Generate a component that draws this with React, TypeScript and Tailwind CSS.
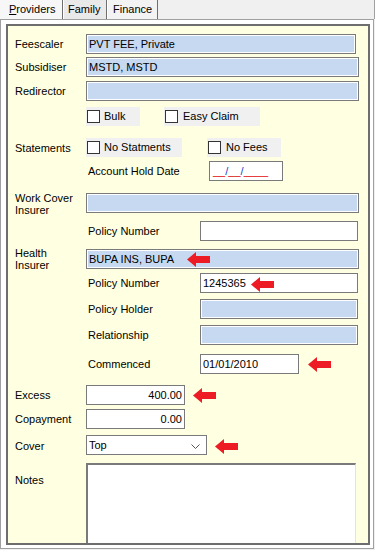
import React from "react";

const Arrow = ({ className = "" }: { className?: string }) => (
  <svg width="23" height="15" viewBox="0 0 23 15" className={className}>
    <polygon points="0,7.5 9,0 9,4 23,4 23,11 9,11 9,15" fill="#ed1c24" />
  </svg>
);

const Field = ({
  w,
  blue,
  right,
  children,
}: {
  w: string;
  blue?: boolean;
  right?: boolean;
  children?: React.ReactNode;
}) => (
  <div
    className={`${w} relative flex h-[20px] shrink-0 items-center border border-[#7a7a7a] ${
      blue ? "bg-[#c6d9f1] shadow-[inset_0_0_0_1px_#ffffff]" : "bg-white"
    } ${right ? "justify-end pr-[2px]" : "pl-[2px]"}`}
  >
    {children}
  </div>
);

const Check = ({ w, label, gap }: { w: string; label: string; gap: string }) => (
  <div className={`${w} flex h-[19px] shrink-0 items-center bg-[#f0f0f0] pl-[1px]`}>
    <span className="h-[13px] w-[13px] shrink-0 border border-[#333333] bg-white" />
    <span className={gap}>{label}</span>
  </div>
);

export default function App() {
  return (
    <div className="h-[550px] w-[375px] overflow-hidden bg-[#f0f0f0] font-['Liberation_Sans',Arial,sans-serif] text-[11px] text-black">
      {/* tab strip */}
      <div className="flex h-[19px] items-stretch">
        <div className="flex w-[63px] items-center border-r border-[#6f6f6f] bg-[#f7f7f7] pl-[9px]">
          <span>
            <span className="underline">P</span>roviders
          </span>
        </div>
        <div className="flex w-[44px] items-center border-l border-r border-l-white border-r-[#6f6f6f] bg-[#e9e9e9] pl-[4px]">
          Family
        </div>
        <div className="flex w-[51px] items-center border-l border-r border-l-white border-r-[#6f6f6f] bg-[#f3f3f3] pl-[5px]">
          Finance
        </div>
        <div className="flex-1 border-r border-[#a0a0a0]" />
      </div>

      {/* panel */}
      <div className="h-[530px] w-[374px] border border-[#a0a0a0] bg-white pb-[3px] pl-[5px] pr-[3px] pt-[4px]">
        <div className="h-[521px] w-[364px] overflow-hidden border-2 border-[#6e6e6e] bg-[#ffffe1] pl-[7px]">
          {/* Feescaler */}
          <div className="mt-[8px] flex h-[20px] items-center">
            <div className="w-[71px] shrink-0">Feescaler</div>
            <Field w="w-[270px]" blue>
              PVT FEE, Private
            </Field>
          </div>
          {/* Subsidiser */}
          <div className="mt-[3px] flex h-[20px] items-center">
            <div className="w-[71px] shrink-0">Subsidiser</div>
            <Field w="w-[273px]" blue>
              MSTD, MSTD
            </Field>
          </div>
          {/* Redirector */}
          <div className="mt-[4px] flex h-[20px] items-center">
            <div className="w-[71px] shrink-0">Redirector</div>
            <Field w="w-[273px]" blue />
          </div>
          {/* Bulk / Easy Claim */}
          <div className="mt-[6px] flex h-[19px] items-center">
            <div className="w-[71px] shrink-0" />
            <Check w="w-[54px]" label="Bulk" gap="ml-[4px]" />
            <div className="ml-[24px]">
              <Check w="w-[96px]" label="Easy Claim" gap="ml-[5px]" />
            </div>
          </div>
          {/* Statements */}
          <div className="mt-[12px] flex h-[19px] items-center">
            <div className="mt-[2px] w-[71px] shrink-0">Statements</div>
            <Check w="w-[96px]" label="No Statments" gap="ml-[4px]" />
            <div className="ml-[25px]">
              <Check w="w-[74px]" label="No Fees" gap="ml-[5px]" />
            </div>
          </div>
          {/* Account Hold Date */}
          <div className="mt-[4px] flex h-[20px] items-center">
            <div className="w-[71px] shrink-0" />
            <div className="w-[123px] shrink-0 pl-[2px]">Account Hold Date</div>
            <Field w="w-[74px]">
              <span className="pl-[1px]">
                <span className="text-[#e00000]">__</span>
                <span className="text-[#1a3cd0]">/</span>
                <span className="text-[#e00000]">__</span>
                <span className="text-[#1a3cd0]">/</span>
                <span className="text-[#e00000]">____</span>
              </span>
            </Field>
          </div>
          {/* Work Cover Insurer */}
          <div className="mt-[12px] flex h-[20px] items-start">
            <div className="-mt-[1px] w-[71px] shrink-0 leading-[12px]">
              Work Cover
              <br />
              Insurer
            </div>
            <Field w="w-[273px]" blue />
          </div>
          {/* Policy Number */}
          <div className="mt-[8px] flex h-[20px] items-center">
            <div className="w-[71px] shrink-0" />
            <div className="w-[114px] shrink-0 pl-[2px]">Policy Number</div>
            <Field w="w-[158px]" />
          </div>
          {/* Health Insurer */}
          <div className="mt-[8px] flex h-[20px] items-start">
            <div className="-mt-[2px] w-[71px] shrink-0 leading-[12px]">
              Health
              <br />
              Insurer
            </div>
            <Field w="w-[273px]" blue>
              BUPA INS, BUPA
              <Arrow className="absolute left-[100px] top-[2px]" />
            </Field>
          </div>
          {/* Policy Number */}
          <div className="mt-[4px] flex h-[20px] items-center">
            <div className="w-[71px] shrink-0" />
            <div className="w-[114px] shrink-0 pl-[2px]">Policy Number</div>
            <Field w="w-[158px]">
              1245365
              <Arrow className="absolute left-[50px] top-[3px]" />
            </Field>
          </div>
          {/* Policy Holder */}
          <div className="mt-[6px] flex h-[20px] items-center">
            <div className="w-[71px] shrink-0" />
            <div className="w-[114px] shrink-0 pl-[2px]">Policy Holder</div>
            <Field w="w-[158px]" blue />
          </div>
          {/* Relationship */}
          <div className="mt-[6px] flex h-[20px] items-center">
            <div className="w-[71px] shrink-0" />
            <div className="w-[114px] shrink-0 pl-[2px]">Relationship</div>
            <Field w="w-[158px]" blue />
          </div>
          {/* Commenced */}
          <div className="mt-[9px] flex h-[20px] items-center">
            <div className="w-[71px] shrink-0" />
            <div className="w-[114px] shrink-0 pl-[2px]">Commenced</div>
            <Field w="w-[99px]">01/01/2010</Field>
            <Arrow className="ml-[9px] mt-[1px]" />
          </div>
          {/* Excess */}
          <div className="mt-[11px] flex h-[20px] items-center">
            <div className="w-[71px] shrink-0">Excess</div>
            <Field w="w-[99px]" right>
              400.00
            </Field>
            <Arrow className="ml-[8px]" />
          </div>
          {/* Copayment */}
          <div className="mt-[4px] flex h-[20px] items-center">
            <div className="w-[71px] shrink-0">Copayment</div>
            <Field w="w-[99px]" right>
              0.00
            </Field>
          </div>
          {/* Cover */}
          <div className="mt-[6px] flex h-[20px] items-center">
            <div className="mt-[3px] w-[71px] shrink-0">Cover</div>
            <Field w="w-[121px]">
              <span>Top</span>
              <svg width="9" height="6" viewBox="0 0 9 6" className="absolute right-[6px] top-[8px]">
                <polyline points="0.5,0.5 4.5,4.5 8.5,0.5" fill="none" stroke="#555555" strokeWidth="1" />
              </svg>
            </Field>
            <Arrow className="ml-[8px] mt-[2px]" />
          </div>
          {/* Notes */}
          <div className="mt-[8px] flex items-start">
            <div className="mt-[9px] w-[71px] shrink-0">Notes</div>
            <div className="h-[90px] w-[270px] shrink-0 border-l-2 border-t-2 border-r border-l-[#7a7a7a] border-t-[#7a7a7a] border-r-[#e3e3e3] bg-white" />
          </div>
        </div>
      </div>
    </div>
  );
}
